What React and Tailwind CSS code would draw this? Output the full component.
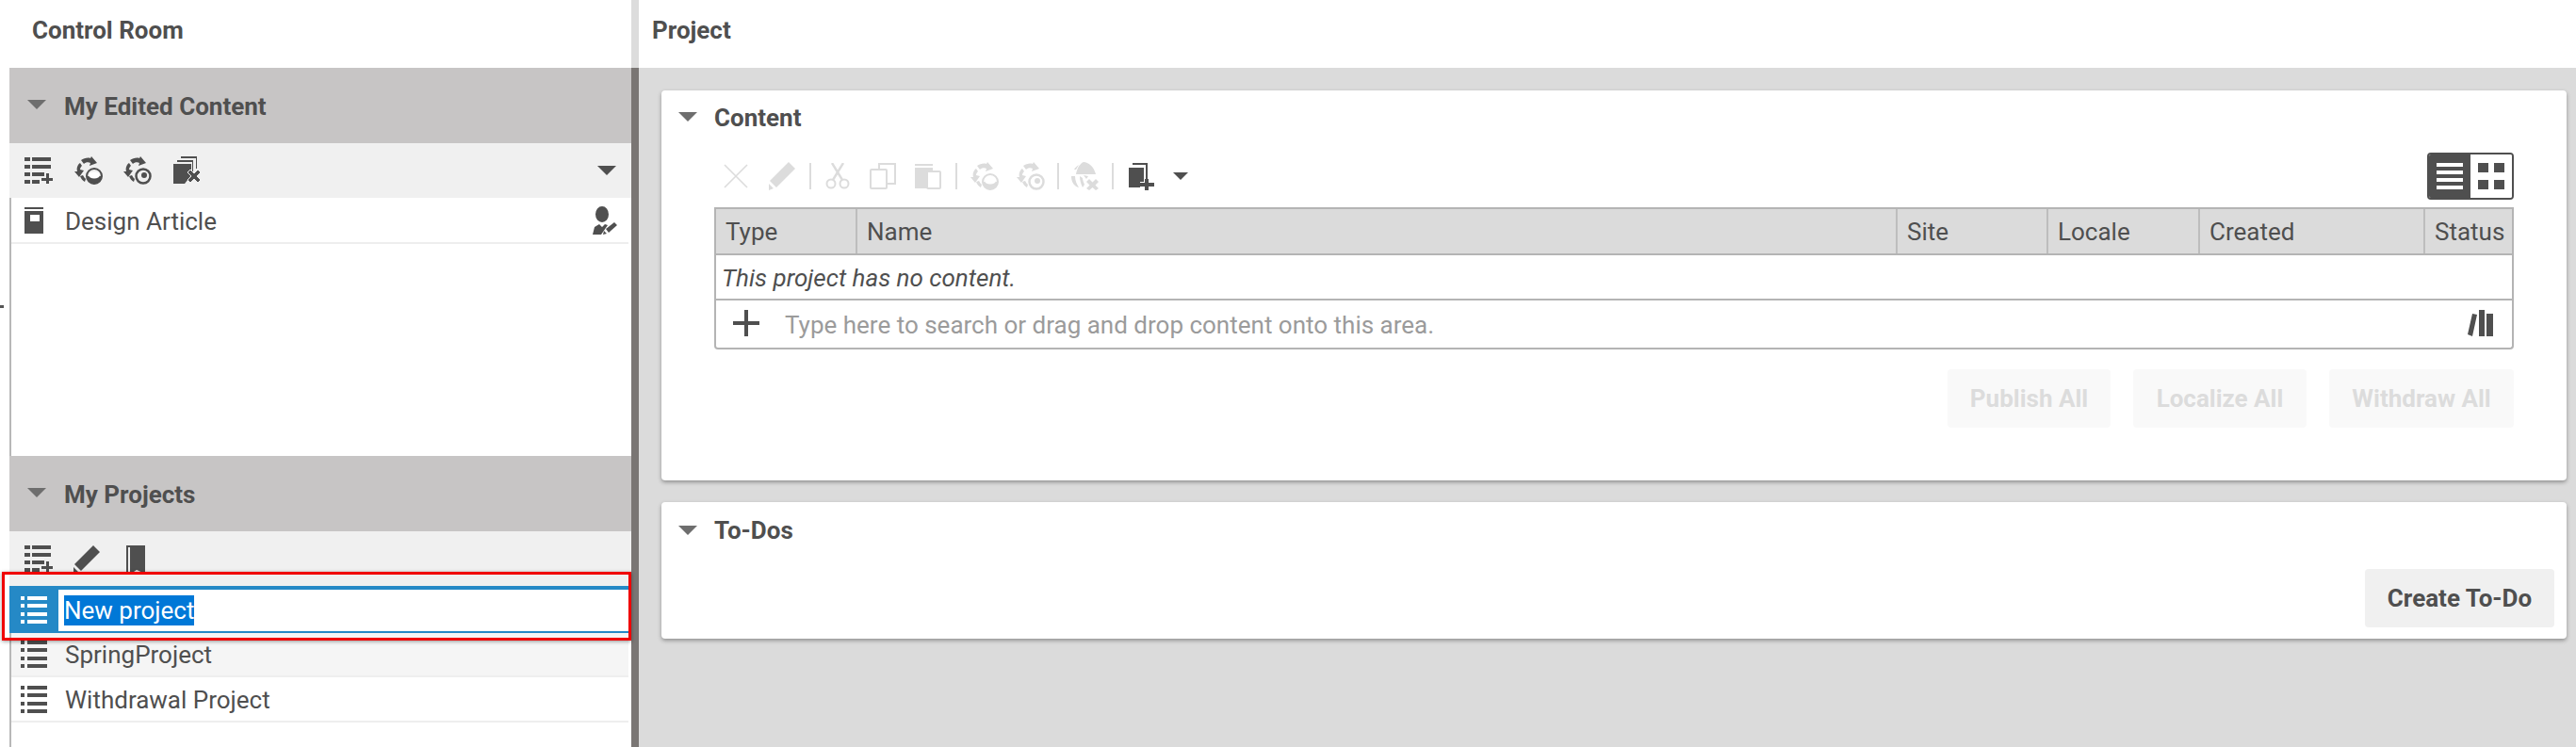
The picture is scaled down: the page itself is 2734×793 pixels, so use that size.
import React from 'react'

const Svg = ({ w = 30, h = 30, className = '', children }) => (
  <svg width={w} height={h} viewBox={`0 0 ${w} ${h}`} fill="currentColor" className={`shrink-0 ${className}`}>
    {children}
  </svg>
)

const ListAddIcon = () => (
  <Svg h={28}>
    <path d="M0 0h6v4H0zM8 0h20v4H8zM0 8h6v4H0zM8 8h20v4H8zM0 16h6v4H0zM8 16h13v4H8zM0 24h6v4H0zM8 24h8v4H8z" />
    <path d="M23 17h3v5h4v3h-4v3h-3v-3h-5v-3h5z" />
  </Svg>
)

const SyncArrows = () => (
  <>
    <path d="M3 16c-1-3 0-7 3-9l2 3c-1 1-2 2-2 4l4 1-5 7-5-6z" />
    <path d="M7 4c3-2 7-3 10-2l1-2 6 7-8 3 1-3c-2-1-5-1-7 1z" />
    <path d="M6 21c1 3 3 5 5 6l1-3c-1-1-2-2-3-4z" />
  </>
)

const SyncDiskIcon = () => (
  <Svg h={30}>
    <SyncArrows />
    <circle cx="21" cy="21" r="8" fill="none" stroke="currentColor" strokeWidth="2" />
    <path d="M13 22c2-3 14-3 16 0 0 4-4 7-8 7s-8-3-8-7z" />
    <ellipse cx="21" cy="20" rx="6" ry="3.5" fill="#fff" />
  </Svg>
)

const SyncTargetIcon = () => (
  <Svg h={30}>
    <SyncArrows />
    <circle cx="21" cy="21" r="7.5" fill="none" stroke="currentColor" strokeWidth="2.5" />
    <circle cx="22" cy="20" r="3" />
  </Svg>
)

const DocsRemoveIcon = () => (
  <Svg h={30}>
    <path d="M0 8h19v12l-7 9H0zM4 6V4h17v13h-1V6zM8 2V0h17v13h-1V2z" />
    <path d="M15 17l3-3 4 4 4-4 3 3-4 4 4 4-3 3-4-4-4 4-3-3 4-4z" stroke="#f0f0f0" strokeWidth="1" />
  </Svg>
)

const DownTriangle = ({ className = '' }) => (
  <Svg w={20} h={10} className={className}>
    <path d="M0 0h20L10 10z" />
  </Svg>
)

const UserEditIcon = () => (
  <Svg w={26} h={30}>
    <ellipse cx="10" cy="8.5" rx="7" ry="8.5" />
    <path d="M0 30l2-8 5-3 3 3 3-3 3 1-7 10z" />
    <path d="M14 24L23 17l3 3-9 8zM12 26l3 3-4 1z" />
  </Svg>
)

const ArticleIcon = () => (
  <Svg w={20} h={28}>
    <path d="M0 0h20v2H0z" />
    <path fillRule="evenodd" d="M0 4h20v24H0zM6 8v7h10V8z" />
  </Svg>
)

const ProjectListIcon = () => (
  <Svg w={28} h={29}>
    <path d="M0 0h4v4H0zM7 0h21v4H7zM0 8h4v4H0zM7 8h21v4H7zM0 17h4v4H0zM7 17h21v4H7zM0 25h4v4H0zM7 25h21v4H7z" />
  </Svg>
)

const PencilIcon = () => (
  <Svg w={28} h={30}>
    <path d="M21 0l7 7L8 27l-7-7zM0 23l5 5-5 2z" />
  </Svg>
)

const BookIcon = () => (
  <Svg w={20} h={30}>
    <path fillRule="evenodd" d="M0 0h20v30l-9-4-6 4H0zM2 2v26h2V2z" />
  </Svg>
)

const XIcon = () => (
  <Svg w={26} h={26}>
    <path d="M1 1l24 24M25 1L1 25" stroke="currentColor" strokeWidth="1.6" fill="none" />
  </Svg>
)

const ScissorsIcon = () => (
  <Svg w={26} h={28}>
    <g fill="none" stroke="currentColor" strokeWidth="2">
      <circle cx="6" cy="22" r="4.5" />
      <circle cx="20" cy="22" r="4.5" />
      <path d="M8 18L19 0M18 18L7 0" strokeWidth="2.4" />
    </g>
  </Svg>
)

const CopyIcon = () => (
  <Svg w={28} h={28}>
    <g fill="none" stroke="currentColor" strokeWidth="2">
      <rect x="1" y="7" width="17" height="20" rx="1" />
      <path d="M10 7V1h17v21h-9" />
    </g>
  </Svg>
)

const PasteIcon = () => (
  <Svg w={28} h={28}>
    <path d="M0 1h19v2H0zM0 5h19v6h-6v16H0z" />
    <rect x="13" y="9" width="14" height="18" rx="1" fill="#fff" stroke="currentColor" strokeWidth="2" />
  </Svg>
)

const GlobeRemoveIcon = () => (
  <Svg w={31} h={30}>
    <path d="M6 13C7 6 11 1 14 0c5 0 11 5 13 13z" />
    <path d="M1 15h4c0 5 2 9 4 12C4 26 1 21 1 15zM4 8c1-2 3-4 5-5-1 2-2 3-3 5zM10 15l3 2c0 2 1 4 2 7l-2 3c-2-4-3-8-3-12zM14 14l5 1-2 3z" />
    <path d="M17 21l3-3 3.5 3.5L27 18l3 3-3.500 3.500L30 28l-3 2-3.500-3-3.500 3-3-2 3.500-3.500z" />
  </Svg>
)

const AddDocIcon = () => (
  <Svg w={28} h={30}>
    <path d="M0 6h16v15h-4v6H0zM4 3V1h16v18h-2V3z" />
    <path d="M17 18h4v4h6v4h-6v4h-4v-4h-5v-4h5z" />
  </Svg>
)

const PlusIcon = () => (
  <Svg w={28} h={28} className="mb-[3px]">
    <path d="M12 0h4v12h12v4H16v12h-4V16H0v-4h12z" />
  </Svg>
)

const LibraryIcon = () => (
  <Svg w={28} h={28} className="mb-[3px]">
    <path d="M5 4l5 1-5 23-5-2zM12 0h6v28h-6zM20 4h7v24h-7z" />
  </Svg>
)

const ListViewIcon = () => (
  <Svg w={28} h={28}>
    <path d="M0 0h28v4H0zM0 8h28v4H0zM0 16h28v4H0zM0 24h28v4H0z" />
  </Svg>
)

const GridViewIcon = () => (
  <Svg w={28} h={28}>
    <path d="M0 0h11v10H0zM17 0h11v10H17zM0 18h11v10H0zM17 18h11v10H17z" />
  </Svg>
)

const Separator = ({ className = '' }) => <div className={`w-[2px] h-[28px] bg-[#dcdcdc] shrink-0 ${className}`} />

const SectionHeader = ({ title }) => (
  <div className="h-[80px] bg-[#c7c5c5] flex items-center">
    <DownTriangle className="ml-[19px] mb-[2px] text-[#6e6e6e]" />
    <span className="ml-[19px] mt-[1px] font-bold">{title}</span>
  </div>
)

const columns = [
  { name: 'Type', width: 'w-[150px]' },
  { name: 'Name', width: 'w-[1104px]' },
  { name: 'Site', width: 'w-[160px]' },
  { name: 'Locale', width: 'w-[161px]' },
  { name: 'Created', width: 'w-[239px]' },
  { name: 'Status', width: 'flex-1' },
]

const DisabledButton = ({ label, width }) => (
  <button className={`h-[62px] ${width} bg-[#f9f9f9] text-[#dcdcdc] font-bold rounded-[4px]`}>{label}</button>
)

export default function App() {
  return (
    <div className="h-[793px] w-[2734px] overflow-hidden flex flex-col bg-white text-[#4f4f4f] text-[26px] leading-[32px] font-['Roboto',sans-serif]">
      {/* Title bars */}
      <div className="h-[72px] flex shrink-0">
        <div className="w-[670px] pl-[34px] pt-[16px] font-bold">Control Room</div>
        <div className="w-[8px] bg-[#dcdcdc]" />
        <div className="flex-1 pl-[14px] pt-[16px] font-bold">Project</div>
      </div>

      <div className="flex flex-1 min-h-0">
        {/* Left gutter */}
        <div className="w-[10px] shrink-0">
          <div className="mt-[252px] w-[4px] h-[3px] bg-[#555]" />
        </div>

        {/* Control room */}
        <div className="w-[660px] shrink-0 flex flex-col">
          <SectionHeader title="My Edited Content" />
          <div className="h-[58px] bg-[#f0f0f0] flex items-center pl-[16px] pr-[16px]">
            <ListAddIcon />
            <div className="ml-[23px]"><SyncDiskIcon /></div>
            <div className="ml-[22px]"><SyncTargetIcon /></div>
            <div className="ml-[23px]"><DocsRemoveIcon /></div>
            <DownTriangle className="ml-auto" />
          </div>
          <div className="h-[274px] bg-white border-l-2 border-[#b8b8b8]">
            <div className="h-[49px] mr-[3px] border-b-2 border-[#eeeeee] flex items-center pl-[14px] pr-[12px]">
              <div className="w-[43px]"><ArticleIcon /></div>
              <span className="flex-1 mt-[2px]">Design Article</span>
              <UserEditIcon />
            </div>
          </div>

          <SectionHeader title="My Projects" />
          <div className="h-[58px] bg-[#f0f0f0] flex items-start pt-[15px] pl-[16px]">
            <ListAddIcon />
            <div className="ml-[22px]"><PencilIcon /></div>
            <div className="ml-[28px]"><BookIcon /></div>
          </div>

          <div className="flex-1 bg-white border-l-2 border-[#b8b8b8]">
            {/* Project being renamed */}
            <div className="relative h-[50px] mr-[3px] -ml-[2px] bg-[#2589c6] flex pt-[4px] pb-[2px]">
              <div className="w-[52px] pl-[12px] pt-[7px] text-white"><ProjectListIcon /></div>
              <div className="flex-1 bg-white pl-[6px] pt-[6px]">
                <span className="inline-block h-[32px] bg-[#0078d7] text-white">New project</span>
              </div>
              <div className="absolute -top-[15px] -left-[8px] -right-[3px] -bottom-[8px] border-[3px] border-[#f00000] shadow-[0_1px_4px_rgba(0,0,0,0.4)] pointer-events-none" />
            </div>
            <div className="h-[47px] mr-[3px] bg-[#f5f5f5] border-b-2 border-[#eeeeee] flex items-center pl-[10px]">
              <div className="w-[47px]"><ProjectListIcon /></div>
              <span className="mt-[1px]">SpringProject</span>
            </div>
            <div className="h-[48px] mr-[3px] border-b-2 border-[#eeeeee] flex items-center pl-[10px]">
              <div className="w-[47px]"><ProjectListIcon /></div>
              <span className="mt-[1px]">Withdrawal Project</span>
            </div>
          </div>
        </div>

        {/* Sash */}
        <div className="w-[8px] shrink-0 bg-[#7a7674]" />

        {/* Project */}
        <div className="flex-1 bg-[#dbdbdb] pl-[24px] pr-[10px] pt-[24px]">
          <div className="h-[414px] bg-white rounded-[4px] shadow-[0_2px_4px_rgba(0,0,0,0.35)] pl-[18px] pr-[56px]">
            <div className="h-[58px] flex items-center">
              <DownTriangle className="mb-[2px] text-[#6e6e6e]" />
              <span className="ml-[18px] font-bold">Content</span>
            </div>
            <div className="ml-[38px]">
              <div className="mt-[8px] h-[50px] flex items-center text-[#dcdcdc]">
                <div className="ml-[10px]"><XIcon /></div>
                <div className="ml-[22px]"><PencilIcon /></div>
                <Separator className="ml-[15px]" />
                <div className="ml-[15px]"><ScissorsIcon /></div>
                <div className="ml-[21px]"><CopyIcon /></div>
                <div className="ml-[20px]"><PasteIcon /></div>
                <Separator className="ml-[15px]" />
                <div className="ml-[14px]"><SyncDiskIcon /></div>
                <div className="ml-[19px]"><SyncTargetIcon /></div>
                <Separator className="ml-[13px]" />
                <div className="ml-[12px]"><GlobeRemoveIcon /></div>
                <Separator className="ml-[13px]" />
                <div className="ml-[16px] text-[#4f4f4f]"><AddDocIcon /></div>
                <DownTriangle className="ml-[19px] mb-[1px] w-[16px] text-[#4f4f4f]" />
                <div className="ml-auto w-[92px] h-[50px] flex rounded-[4px] border-2 border-[#4f4f4f] overflow-hidden">
                  <div className="w-[44px] bg-[#4f4f4f] text-white flex items-center justify-center"><ListViewIcon /></div>
                  <div className="flex-1 bg-white text-[#4f4f4f] flex items-center justify-center"><GridViewIcon /></div>
                </div>
              </div>

              <div className="mt-[8px] h-[51px] flex bg-[#dbdbdb] border-2 border-[#b4b4b4]">
                {columns.map((col, idx) => (
                  <div
                    key={col.name}
                    className={`${col.width} pl-[10px] pt-[1px] flex items-center ${idx < columns.length - 1 ? 'border-r-2 border-[#bdbdbd]' : ''}`}
                  >
                    {col.name}
                  </div>
                ))}
              </div>
              <div className="border-2 border-t-0 border-[#b4b4b4] rounded-b-[4px]">
                <div className="h-[48px] flex items-center pl-[6px] pt-[2px] italic border-b-2 border-[#b4b4b4]">This project has no content.</div>
                <div className="h-[50px] flex items-center pl-[18px] pr-[19px]">
                  <PlusIcon />
                  <span className="ml-[27px] flex-1 pt-[1px] text-[#9b9b9b]">Type here to search or drag and drop content onto this area.</span>
                  <LibraryIcon />
                </div>
              </div>

              <div className="mt-[21px] flex justify-end gap-[24px]">
                <DisabledButton label="Publish All" width="w-[173px]" />
                <DisabledButton label="Localize All" width="w-[184px]" />
                <DisabledButton label="Withdraw All" width="w-[196px]" />
              </div>
            </div>
          </div>

          <div className="mt-[23px] h-[145px] bg-white rounded-[4px] shadow-[0_2px_4px_rgba(0,0,0,0.35)] pl-[18px] pr-[13px] pt-[14px]">
            <div className="h-[32px] flex items-center">
              <DownTriangle className="text-[#6e6e6e]" />
              <span className="ml-[18px] font-bold">To-Dos</span>
            </div>
            <div className="mt-[25px] flex justify-end">
              <button className="h-[62px] w-[201px] bg-[#f0f0f0] font-bold rounded-[4px]">Create To-Do</button>
            </div>
          </div>
        </div>
      </div>
    </div>
  )
}
